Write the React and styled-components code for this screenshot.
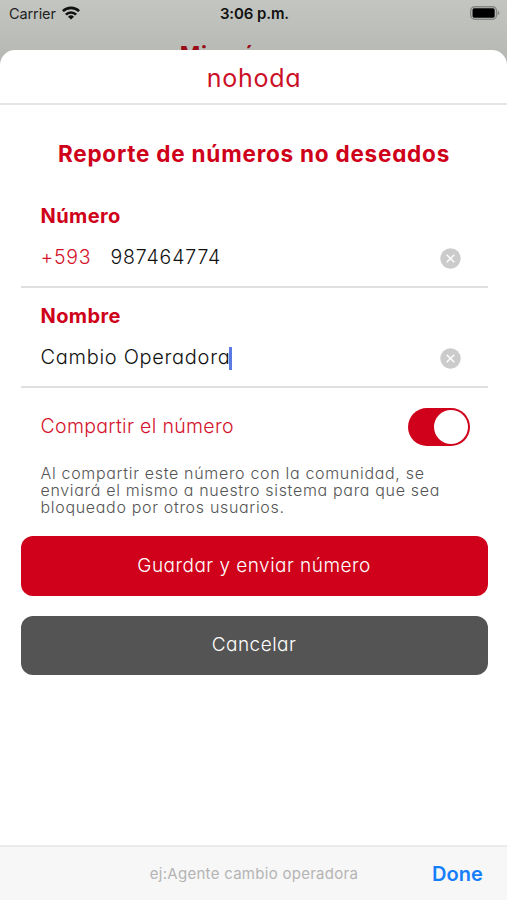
import React from 'react';
import styled, { createGlobalStyle } from 'styled-components';

const GlobalStyle = createGlobalStyle`
  * {
    box-sizing: border-box;
    margin: 0;
    padding: 0;
  }

  body {
    font-family: Inter, 'Liberation Sans', sans-serif;
    background: #bbbdba;
  }
`;

const Screen = styled.div`
  display: flex;
  flex-direction: column;
  width: 507px;
  height: 900px;
  overflow: hidden;
  background: linear-gradient(#c3c5c1 0, #b4b6b2 70px);
`;

const StatusBar = styled.div`
  display: grid;
  grid-template-columns: 1fr auto 1fr;
  height: 27px;
  padding: 0 7px 0 9px;
  line-height: 27px;
  color: #111;
`;

const Carrier = styled.div`
  display: flex;
  gap: 6px;
  font-size: 14.5px;
  letter-spacing: -0.1px;
  color: #222;

  svg {
    margin-top: 6px;
  }
`;

const Time = styled.div`
  font-size: 15px;
  font-weight: 600;
  letter-spacing: -0.1px;
`;

const Battery = styled.div`
  display: flex;
  justify-content: flex-end;

  svg {
    margin-top: 6px;
  }
`;

const BackTitle = styled.div`
  height: 23px;
  overflow: hidden;
  line-height: 55px;
  font-size: 22px;
  font-weight: 700;
  letter-spacing: 0.8px;
  text-align: center;
  color: #980d17;
`;

const Sheet = styled.main`
  flex: 1;
  display: flex;
  flex-direction: column;
  border-radius: 15px 15px 0 0;
  background: #fff;
  font-feature-settings: 'cv11';
`;

const Brand = styled.header`
  height: 55px;
  padding: 2px 0 0 1px;
  border-bottom: 2px solid #e5e5e5;
  line-height: 53px;
  font-size: 25px;
  letter-spacing: 0.7px;
  text-align: center;
  color: #cb1027;
`;

const Form = styled.div`
  flex: 1;
  padding: 34px 19.5px 0 20.5px;
`;

const Title = styled.h1`
  margin-bottom: 20px;
  line-height: 29px;
  font-size: 22.5px;
  font-weight: 700;
  letter-spacing: 0.77px;
  white-space: nowrap;
  text-align: center;
  color: #cf0019;
`;

const Field = styled.div`
  height: 100px;
  padding: 16px 27px 0 20px;
  border-bottom: 2px solid #e0e0e0;
`;

const Label = styled.div`
  margin-bottom: 16px;
  line-height: 24px;
  font-size: 20px;
  font-weight: 700;
  letter-spacing: 0.4px;
  color: #cf0019;
`;

const InputRow = styled.div`
  display: flex;
  align-items: center;
  height: 26px;
  line-height: 26px;
  font-weight: 300;
  color: #111;

  svg {
    margin: 2px 0 0 auto;
  }
`;

const Prefix = styled.span`
  width: 70px;
  font-size: 19.5px;
  letter-spacing: 0.7px;
  color: #d3122b;
`;

const Value = styled.span`
  font-size: ${(props) => (props.$digits ? '19.5px' : '20px')};
  letter-spacing: ${(props) => (props.$digits ? '0.85px' : '0.7px')};
`;

const Caret = styled.span`
  width: 3px;
  height: 23px;
  margin: 2px 0 0 -1.5px;
  background: #5b7be3;
`;

const ShareRow = styled.div`
  display: flex;
  align-items: center;
  justify-content: space-between;
  margin-top: 19.5px;
  padding: 0 17.5px 0 20px;
  font-size: 19.5px;
  font-weight: 300;
  letter-spacing: 0.32px;
  color: #d3122b;
`;

const ShareText = styled.span`
  margin-bottom: 2px;
`;

const Toggle = styled.div`
  display: flex;
  justify-content: flex-end;
  width: 62.5px;
  height: 38px;
  padding: 2px 2.5px;
  border-radius: 19px;
  background: #d0021b;
`;

const Knob = styled.div`
  width: 34px;
  height: 34px;
  border-radius: 50%;
  background: #fff;
`;

const Note = styled.p`
  margin: 19.3px 0 19.6px;
  padding-left: 20px;
  line-height: 17.2px;
  font-size: 16px;
  font-weight: 300;
  letter-spacing: 0.68px;
  white-space: nowrap;
  color: #555;
`;

const Button = styled.button`
  display: block;
  width: 100%;
  height: 59.5px;
  margin-bottom: 20px;
  padding-bottom: 1.5px;
  border: 0;
  border-radius: 12px;
  background: ${(props) => (props.$primary ? '#d0021b' : '#545454')};
  color: #fff;
  font: 300 19px Inter, sans-serif;
  font-feature-settings: 'cv11';
  letter-spacing: 0.47px;
`;

const Toolbar = styled.footer`
  display: grid;
  grid-template-columns: 1fr auto 1fr;
  align-items: center;
  height: 55px;
  padding: 0 24px;
  border-top: 2px solid #ebebeb;
  background: #f7f7f7;
  font-feature-settings: normal;
`;

const Hint = styled.span`
  grid-column: 2;
  padding-left: 1px;
  font-size: 15px;
  letter-spacing: 0.28px;
  color: #b4b4b4;
`;

const Done = styled.span`
  justify-self: end;
  font-size: 20px;
  font-weight: 600;
  letter-spacing: 0.1px;
  color: #157efb;
`;

const WifiIcon = () => (
  <svg width="18" height="14" viewBox="0 0 18 14">
    <g fill="none" stroke="#111" strokeWidth="2.6">
      <path d="M0.9 5.2a11.5 11.5 0 0 1 16.2 0" />
      <path d="M3.9 8.6a7.2 7.2 0 0 1 10.2 0" />
    </g>
    <path fill="#111" d="M9 13.6L6 10.8a4.3 4.3 0 0 1 6 0z" />
  </svg>
);

const BatteryIcon = () => (
  <svg width="30" height="14" viewBox="0 0 30 14">
    <rect x="0.7" y="0.7" width="25.8" height="12.6" rx="4" fill="none" stroke="#858784" strokeWidth="1.4" />
    <rect x="2.5" y="2.3" width="22.2" height="9.4" rx="1.6" fill="#000" />
    <path d="M27.7 4.8c2.2 .7 2.2 3.7 0 4.4z" fill="#858784" />
  </svg>
);

const ClearIcon = () => (
  <svg width="21" height="21" viewBox="0 0 21 21">
    <circle cx="10.5" cy="10.5" r="10.2" fill="#cbcbcb" />
    <path d="M6.7 6.7l7.6 7.6M14.3 6.7l-7.6 7.6" stroke="#fff" strokeWidth="1.4" />
  </svg>
);

const App = () => {
  return (
    <Screen>
      <GlobalStyle />
      <StatusBar>
        <Carrier>
          Carrier
          <WifiIcon />
        </Carrier>
        <Time>3:06 p.m.</Time>
        <Battery>
          <BatteryIcon />
        </Battery>
      </StatusBar>
      <BackTitle>Mis números</BackTitle>
      <Sheet>
        <Brand>nohoda</Brand>
        <Form>
          <Title>Reporte de números no deseados</Title>
          <Field>
            <Label>Número</Label>
            <InputRow>
              <Prefix>+593</Prefix>
              <Value $digits>987464774</Value>
              <ClearIcon />
            </InputRow>
          </Field>
          <Field>
            <Label>Nombre</Label>
            <InputRow>
              <Value>Cambio Operadora</Value>
              <Caret />
              <ClearIcon />
            </InputRow>
          </Field>
          <ShareRow>
            <ShareText>Compartir el número</ShareText>
            <Toggle>
              <Knob />
            </Toggle>
          </ShareRow>
          <Note>
            Al compartir este número con la comunidad, se
            <br />
            enviará el mismo a nuestro sistema para que sea
            <br />
            bloqueado por otros usuarios.
          </Note>
          <Button $primary>Guardar y enviar número</Button>
          <Button>Cancelar</Button>
        </Form>
        <Toolbar>
          <Hint>ej:Agente cambio operadora</Hint>
          <Done>Done</Done>
        </Toolbar>
      </Sheet>
    </Screen>
  );
};

export default App;
